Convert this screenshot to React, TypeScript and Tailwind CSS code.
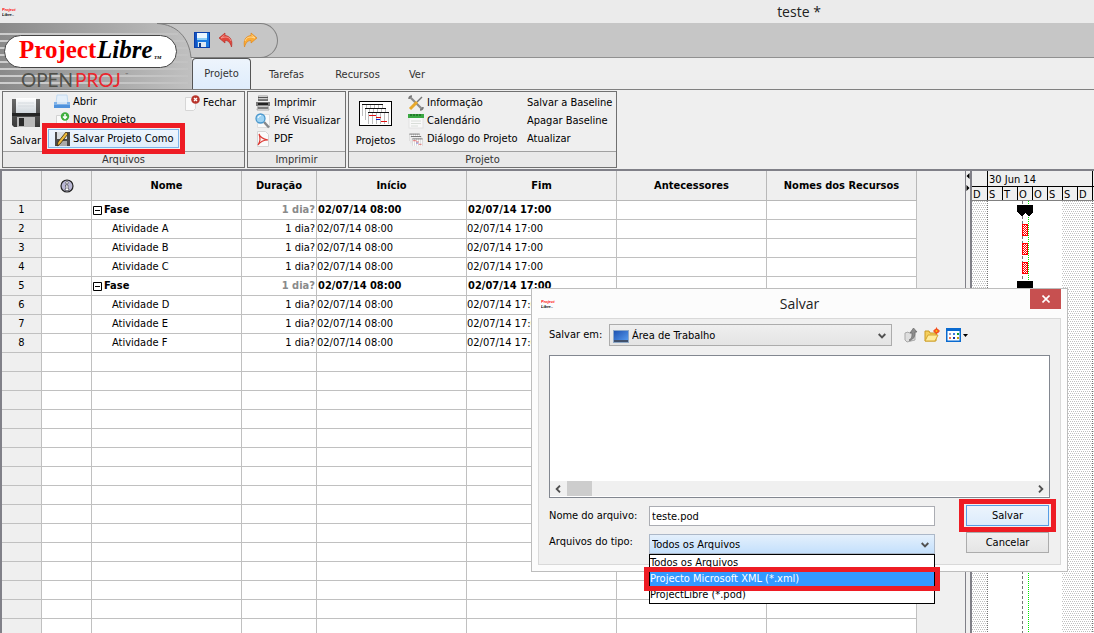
import React from 'react';

type Task = {
  name: string;
  start: string;
  end: string;
  phase?: boolean;
};

const START = '02/07/14 08:00';
const END = '02/07/14 17:00';

const tasks: Task[] = [
  { name: 'Fase', start: START, end: END, phase: true },
  { name: 'Atividade A', start: START, end: END },
  { name: 'Atividade B', start: START, end: END },
  { name: 'Atividade C', start: START, end: END },
  { name: 'Fase', start: START, end: END, phase: true },
  { name: 'Atividade D', start: START, end: END },
  { name: 'Atividade E', start: START, end: END },
  { name: 'Atividade F', start: START, end: END },
];

const emptyRows = Array.from({ length: 16 }, (_, i) => i);
const days = ['D', 'S', 'T', 'O', 'O', 'S', 'S', 'D'];
const tabs = ['Projeto', 'Tarefas', 'Recursos', 'Ver'];

/* ---------- icons ---------- */

const TinyLogo = () => (
  <svg width="17" height="11" viewBox="0 0 17 11" className="shrink-0">
    <text x="0" y="4" fontSize="4" fontWeight="bold" fontStyle="italic" fontFamily="Liberation Sans, sans-serif" fill="#f00">Project</text>
    <text x="0" y="9" fontSize="4" fontWeight="bold" fontStyle="italic" fontFamily="Liberation Sans, sans-serif" fill="#000">Libre..</text>
  </svg>
);

const DiskBlue = () => (
  <svg width="16" height="16" viewBox="0 0 16 16">
    <rect x="0.5" y="0.5" width="15" height="15" fill="#1d7be0" stroke="#0b3fa8" />
    <path d="M1 1h2v14H1z" fill="#1454c4" />
    <rect x="3" y="1" width="10" height="7" fill="#eaf6ff" />
    <rect x="3" y="6" width="10" height="2" fill="#8ccdf5" />
    <rect x="4" y="10" width="8" height="5" fill="#dfe9f2" />
    <rect x="5" y="11" width="2" height="4" fill="#173f86" />
  </svg>
);

const UndoIcon = () => (
  <svg width="16" height="16" viewBox="0 0 16 16">
    <path d="M7 1L1 6l6 5V8.500c3 0 5 1.500 6.500 6.500C15 8 12 4 7 3.500z" fill="#e0463c" stroke="#b3261e" strokeWidth="0.6" />
    <path d="M6.500 3L3 6l4-1c3 0 5 1 6 4" fill="none" stroke="#f6a59d" strokeWidth="0.8" />
  </svg>
);

const RedoIcon = () => (
  <svg width="16" height="16" viewBox="0 0 16 16">
    <path d="M9 1l6 5-6 5V8.500c-3 0-5 1.500-6.500 6.500C1 8 4 4 9 3.500z" fill="#fbab35" stroke="#dd8010" strokeWidth="0.6" />
    <path d="M9.500 3L13 6 9 5c-3 0-5 1-6 4" fill="none" stroke="#ffe0a3" strokeWidth="0.8" />
  </svg>
);

const SaveBig = () => (
  <svg width="30" height="32" viewBox="0 0 30 32">
    <defs>
      <linearGradient id="disk" x1="0" y1="0" x2="0" y2="1">
        <stop offset="0" stopColor="#6a6a6a" />
        <stop offset="1" stopColor="#3a3a3a" />
      </linearGradient>
      <linearGradient id="label" x1="0" y1="0" x2="0" y2="1">
        <stop offset="0" stopColor="#fff" />
        <stop offset="1" stopColor="#cfd6dc" />
      </linearGradient>
    </defs>
    <path d="M1 2h28v28H3l-2-2z" fill="url(#disk)" />
    <rect x="5" y="1" width="20" height="15" fill="url(#label)" />
    <path d="M7 6h16M7 9h16" stroke="#d5dade" />
    <rect x="1" y="16" width="28" height="3" fill="#242424" />
    <rect x="6" y="20" width="18" height="10" fill="#b9b9b9" />
    <rect x="8" y="21" width="5" height="8" fill="#2a2a2a" />
  </svg>
);

const OpenIcon = () => (
  <svg width="16" height="16" viewBox="0 0 16 16">
    <path d="M3 1h10l1 8H2z" fill="#e4effa" stroke="#c3daf0" />
    <path d="M0 8h3v2h10V8h3v6H0z" fill="#7fb2e8" />
    <path d="M0 11h16v3H0z" fill="#4f92dc" />
  </svg>
);

const NewIcon = () => (
  <svg width="16" height="16" viewBox="0 0 16 16">
    <path d="M2.500 3.500h10v12h-10z" fill="#fafafa" stroke="#d2d2d2" />
    <circle cx="11" cy="4.500" r="4.200" fill="#3fae3d" />
    <path d="M11 2v4M9 4.500l2 2 2-2" stroke="#fff" strokeWidth="1.500" fill="none" />
  </svg>
);

const SaveAsIcon = () => (
  <svg width="16" height="16" viewBox="0 0 16 16">
    <rect x="1" y="1" width="15" height="14" fill="#4b4b4b" />
    <rect x="3" y="1" width="10" height="7" fill="#d9dde0" />
    <rect x="5" y="10" width="8" height="5" fill="#a9a9a9" />
    <path d="M12 1L4 11l-1 4 3-2 8-10z" fill="#edbb3b" stroke="#3c2c0c" strokeWidth="0.8" />
  </svg>
);

const CloseDocIcon = () => (
  <svg width="15" height="16" viewBox="0 0 15 16">
    <path d="M0.500 2.500h10v11l-2 2h-8z" fill="#fafafa" stroke="#d6d6d6" />
    <circle cx="10.500" cy="4.500" r="4.300" fill="#b8352c" />
    <path d="M9 3l3 3M12 3L9 6" stroke="#fff" strokeWidth="1.300" />
  </svg>
);

const PrinterIcon = () => (
  <svg width="16" height="16" viewBox="0 0 16 16">
    <path d="M3.500 0.500h9v5h-9z" fill="#f6f6f6" stroke="#c4c4c4" />
    <path d="M3 2.500h10M3 5h10" stroke="#555" strokeWidth="1.500" />
    <path d="M1 7h14v4H1z" fill="#777" />
    <path d="M3 9h10" stroke="#222" strokeWidth="2" />
    <path d="M3 11h10l1 4H2z" fill="#eee" stroke="#a8a8a8" />
    <path d="M3 13h10" stroke="#555" strokeWidth="1.500" />
  </svg>
);

const PreviewIcon = () => (
  <svg width="16" height="16" viewBox="0 0 16 16">
    <path d="M2.500 1.500h12v13h-12z" fill="#fafafa" stroke="#dedede" />
    <path d="M9 9l5 5.500" stroke="#86898c" strokeWidth="2.500" />
    <circle cx="5.500" cy="5.500" r="4.500" fill="#9ed3f3" stroke="#4a97cc" strokeWidth="1.300" />
    <path d="M3 5a3 3 0 0 1 3-2.500" stroke="#fff" fill="none" />
  </svg>
);

const PdfIcon = () => (
  <svg width="16" height="16" viewBox="0 0 16 16">
    <path d="M2.500 0.500h8l3 3v12h-11z" fill="#fafafa" stroke="#d4d4d4" />
    <path d="M4 3c1 3 4 5 9 6-5 0-8 2-10 5 2-3 3-6 1-11z" stroke="#dc3a34" strokeWidth="1.200" fill="none" />
  </svg>
);

const GanttPages = ({ size }: { size: 'big' | 'small' }) => (
  <svg width={size === 'big' ? 33 : 16} height={size === 'big' ? 25 : 15} viewBox="0 0 33 25" preserveAspectRatio="none">
    {size === 'big' && <rect x="0.500" y="0.500" width="32" height="24" fill="#fff" stroke="#000" />}
    {[[3, 3], [6, 7], [9, 11]].map(([x, y]) => (
      <g key={x}>
        <rect x={x} y={y} width="20" height="12" fill="#fff" />
        <path d={`M${x + 0.5} ${y}v12M${x + 4.5} ${y}v12M${x + 8.5} ${y}v12M${x + 12.5} ${y}v12M${x + 16.5} ${y}v12M${x + 20.5} ${y}v12`} stroke="#bdbdbd" />
        <path d={`M${x} ${y + 0.5}h21`} stroke="#111" />
      </g>
    ))}
    <path d="M10 14.500h7M17 16.500h5M22 20.500h6" stroke="#e01010" />
    <path d="M17 18.500h4" stroke="#1020d0" />
  </svg>
);

const ToolsIcon = () => (
  <svg width="16" height="16" viewBox="0 0 16 16">
    <path d="M2 2l12 12" stroke="#8c8c8c" strokeWidth="2.200" />
    <path d="M1 4c0-2 1-3 3-3M12 15c2 0 3-1 3-3" stroke="#777" strokeWidth="1.500" fill="none" />
    <path d="M9 7l5-5" stroke="#777" strokeWidth="1.500" />
    <path d="M2 14l7-7" stroke="#e8a92c" strokeWidth="3" />
  </svg>
);

const CalendarIcon = () => (
  <svg width="16" height="16" viewBox="0 0 16 16">
    <rect x="1" y="2" width="14" height="13" fill="#f9f9f9" stroke="#e2e2e2" />
    <rect x="0" y="1" width="16" height="4" fill="#3aa843" />
    <path d="M3 1v2M6 1v2M9 1v2M12 1v2" stroke="#124f17" />
    <path d="M3 8h10M3 10.500h10M3 13h7" stroke="#d9ded9" />
  </svg>
);

const InfoBadge = () => (
  <svg width="14" height="14" viewBox="0 0 14 14" className="mx-auto" aria-label="Indicadores">
    <circle cx="7" cy="7" r="6" fill="#b9b7d4" stroke="#222" strokeWidth="1.200" />
    <circle cx="7" cy="3.800" r="1.300" fill="#fff" stroke="#333" strokeWidth="0.600" />
    <path d="M5.500 6h2.500v4h1v1.500H5V10h1V7.300h-.5z" fill="#fff" stroke="#333" strokeWidth="0.600" />
  </svg>
);

const Chevron = ({ className = '' }: { className?: string }) => (
  <svg width="8" height="6" viewBox="0 0 8 6" className={className}>
    <path d="M0.700 1L4 4.300 7.300 1" stroke="#505050" strokeWidth="1.900" fill="none" />
  </svg>
);

const UpFolderIcon = () => (
  <svg width="14" height="16" viewBox="0 0 14 16">
    <path d="M1 6l3-1 1 1 6-1v8l-8 2-2-2z" fill="#dedede" stroke="#a9a9a9" />
    <path d="M5 13c3-1 3-4 3-7H6l3.500-5L13 5h-2c0 4-1 7-5 8.500z" fill="#8d8d8d" stroke="#666" strokeWidth="0.700" />
  </svg>
);

const NewFolderIcon = () => (
  <svg width="16" height="16" viewBox="0 0 16 16">
    <path d="M1 14V4h4l1 2h6v8z" fill="#f6cf5c" stroke="#c99a22" />
    <path d="M1 14l3-6h10l-3 6z" fill="#ffec9c" stroke="#d4a631" />
    <circle cx="12.500" cy="4" r="2.500" fill="#f4511e" />
    <path d="M12.500 0.500v7M9 4h7" stroke="#f4511e" />
    <circle cx="12.500" cy="4" r="1" fill="#ffc107" />
  </svg>
);

const ViewMenuIcon = () => (
  <svg width="22" height="14" viewBox="0 0 22 14">
    <rect x="0.750" y="0.750" width="13.500" height="12.500" fill="#fff" stroke="#0a6ad0" strokeWidth="1.500" />
    <rect x="0" y="0" width="15" height="3" fill="#0a6ad0" />
    <path d="M3 5h2v2H3z" fill="#9a9ac8" />
    <path d="M7 5h2v2H7z" fill="#3c7be0" />
    <path d="M11 5h2v2h-2z" fill="#149a2c" />
    <path d="M3 9h2v2H3z" fill="#f0764a" />
    <path d="M7 9h2v2H7z" fill="#15329c" />
    <path d="M11 9h2v2h-2z" fill="#c79a10" />
    <path d="M17 6h5l-2.500 3z" fill="#000" />
  </svg>
);

const DesktopIcon = () => (
  <svg width="16" height="13" viewBox="0 0 16 13" className="pointer-events-none absolute left-1 top-[6px]">
    <defs>
      <linearGradient id="screen" x1="0" y1="0" x2="1" y2="1">
        <stop offset="0" stopColor="#1c4fae" />
        <stop offset="1" stopColor="#5ba2f5" />
      </linearGradient>
    </defs>
    <rect x="0.500" y="0.500" width="15" height="12" fill="url(#screen)" stroke="#8ea9c8" />
    <rect x="1" y="10" width="14" height="2" fill="#40506b" />
  </svg>
);

/* ---------- ribbon ---------- */

const Logo = () => (
  <svg width="192" height="67" viewBox="0 0 192 67" className="shrink-0" role="img" aria-label="ProjectLibre OpenProj">
    <defs>
      <linearGradient id="metal" x1="0" y1="0" x2="1" y2="0">
        <stop offset="0" stopColor="#8a8a8a" />
        <stop offset="1" stopColor="#c0c0c0" />
      </linearGradient>
      <linearGradient id="stripe" x1="0" y1="0" x2="1" y2="0">
        <stop offset="0" stopColor="#cdcdcd" />
        <stop offset="1" stopColor="#c2c2c2" />
      </linearGradient>
    </defs>
    <rect width="192" height="67" fill="#c6c6c6" />
    <path d="M0 0h157c20 1 32 14 34 34v33H0z" fill="url(#metal)" />
    {[10, 17, 24, 31, 38, 45, 52, 59].map((y) => (
      <rect key={y} x="0" y={y} width={y < 15 ? 178 : 188} height="2" fill="url(#stripe)" />
    ))}
    <path d="M157 0.500h35M157 0.500c20 1 32 14 34 34h1" fill="none" stroke="#7d7d7d" />
    <rect x="4.500" y="12.500" width="172" height="32" rx="16" fill="#fff" stroke="#444" />
    <g fontFamily="'Liberation Serif', serif" fontWeight="bold">
      <text x="19" y="35" fontSize="25" fill="#f00">Project</text>
      <text x="97" y="35" fontSize="25" fontStyle="italic" fill="#000">Libre</text>
      <text x="154" y="36" fontSize="5" fontStyle="italic" fill="#000">TM</text>
    </g>
    <g fontFamily="Lato, sans-serif" fontSize="19">
      <text x="21" y="64" fill="#4f504a">OPEN</text>
      <text x="75" y="64" fill="#e9262d">PROJ</text>
    </g>
    <text x="125" y="53" fontSize="4" fill="#444">™</text>
    <path d="M0 66.500h192" stroke="#8a8a8a" />
  </svg>
);

type CommandProps = {
  icon?: React.ReactNode;
  label: string;
};

const Command: React.FC<CommandProps> = ({ icon, label }) => (
  <button className="flex h-[18px] items-center gap-[3px] whitespace-nowrap">
    {icon}
    <span>{label}</span>
  </button>
);

type GroupProps = {
  title: string;
  className: string;
  children: React.ReactNode;
};

const RibbonGroup: React.FC<GroupProps> = ({ title, className, children }) => (
  <section className={`flex h-[77px] shrink-0 flex-col border border-[#707070] bg-[#efefef] ${className}`}>
    <div className="flex min-h-0 flex-1">{children}</div>
    <h2 className="h-4 border-t border-[#a0a0a0] bg-[#e9e9e9] text-center leading-[15px] text-[#333]">{title}</h2>
  </section>
);

const Ribbon = () => (
  <header className="shrink-0">
    <div className="flex h-[23px] items-start bg-[#ebebeb]">
      <div className="w-[504px] p-[2px] pt-[7px]">
        <TinyLogo />
      </div>
      <h1 className="flex-1 text-center font-['Open_Sans',sans-serif] text-sm leading-6 text-[#222]">teste *</h1>
    </div>

    <div className="flex h-[67px]">
      <Logo />
      <div className="flex min-w-0 flex-1 flex-col">
        <div className="flex h-[35px] border-b border-[#909090] bg-[#c6c6c6]">
          <div className="flex h-[35px] w-[86px] items-center gap-2 rounded-r-full border border-l-0 border-[#808080] pb-px pl-[2px]">
            <button aria-label="Salvar"><DiskBlue /></button>
            <button aria-label="Desfazer"><UndoIcon /></button>
            <button aria-label="Refazer"><RedoIcon /></button>
          </div>
        </div>
        <nav className="flex h-8 border-b border-[#808080] bg-[#eeeeee]">
          {tabs.map((tab, i) => (
            <button
              key={tab}
              className={
                i === 0
                  ? 'w-[59px] rounded-t-sm border border-b-0 border-[#555] bg-gradient-to-b from-[#edf4fc] to-[#dfedfc] text-[#333]'
                  : i === 3 ? 'w-[48px] pt-0.5 text-[#333]' : 'w-[71px] pt-0.5 text-[#333]'
              }
            >
              {tab}
            </button>
          ))}
        </nav>
      </div>
    </div>

    <div className="flex gap-0.5 bg-[#efefef] px-[2px] py-px">
      <RibbonGroup title="Arquivos" className="w-[243px]">
        <button className="flex w-[45px] flex-col items-center gap-1 pt-[5px]">
          <SaveBig />
          <span className="leading-4">Salvar</span>
        </button>
        <div className="flex flex-col pt-px">
          <div className="pl-1.5"><Command icon={<OpenIcon />} label="Abrir" /></div>
          <div className="pl-1.5"><Command icon={<NewIcon />} label="Novo Projeto" /></div>
          <button className="relative flex h-[19px] w-[131px] items-center gap-[3px] whitespace-nowrap border border-[#7db5ea] bg-gradient-to-b from-[#eef5fd] to-[#dfeefc] pl-[5px]">
            <SaveAsIcon />
            <span>Salvar Projeto Como</span>
            <span className="pointer-events-none absolute -inset-x-[7px] -inset-y-[7px] border-[5px] border-[#ee1c24]" />
          </button>
        </div>
        <div className="pl-1.5 pt-0.5"><Command icon={<CloseDocIcon />} label="Fechar" /></div>
      </RibbonGroup>

      <RibbonGroup title="Imprimir" className="w-[99px]">
        <div className="flex flex-col pl-[7px] pt-0.5">
          <Command icon={<PrinterIcon />} label="Imprimir" />
          <Command icon={<PreviewIcon />} label="Pré Visualizar" />
          <Command icon={<PdfIcon />} label="PDF" />
        </div>
      </RibbonGroup>

      <RibbonGroup title="Projeto" className="w-[269px]">
        <button className="flex w-[53px] flex-col items-center gap-[7px] pt-[9px]">
          <GanttPages size="big" />
          <span className="leading-4">Projetos</span>
        </button>
        <div className="flex w-[125px] flex-col pl-1.5 pt-0.5">
          <Command icon={<ToolsIcon />} label="Informação" />
          <Command icon={<CalendarIcon />} label="Calendário" />
          <Command icon={<GanttPages size="small" />} label="Diálogo do Projeto" />
        </div>
        <div className="flex flex-col pt-0.5">
          <Command label="Salvar a Baseline" />
          <Command label="Apagar Baseline" />
          <Command label="Atualizar" />
        </div>
      </RibbonGroup>
    </div>
  </header>
);

/* ---------- task sheet ---------- */

const TaskSheet = () => (
  <div className="min-w-0 flex-1 overflow-hidden bg-[#f0f0f0]">
    <table className="w-[915px] table-fixed border-separate border-spacing-0 bg-white [&_td]:h-[19px] [&_td]:overflow-hidden [&_td]:whitespace-nowrap [&_td]:border-b [&_td]:border-r [&_td]:border-[#c0c0c0] [&_td]:p-0 [&_td]:leading-[18px] [&_th]:h-[30px] [&_th]:border-b [&_th]:border-r [&_th]:border-[#b8b8b8] [&_th]:bg-[#efefef] [&_th]:p-0">
      <colgroup>
        <col className="w-10" />
        <col className="w-[50px]" />
        <col className="w-[150px]" />
        <col className="w-[75px]" />
        <col className="w-[150px]" />
        <col className="w-[150px]" />
        <col className="w-[150px]" />
        <col className="w-[150px]" />
      </colgroup>
      <thead>
        <tr>
          <th />
          <th><InfoBadge /></th>
          <th>Nome</th>
          <th>Duração</th>
          <th>Início</th>
          <th>Fim</th>
          <th>Antecessores</th>
          <th>Nomes dos Recursos</th>
        </tr>
      </thead>
      <tbody>
        {tasks.map((task, i) => (
          <tr key={i} className={task.phase ? 'font-bold' : ''}>
            <td className="bg-[#efefef] text-center font-normal">{i + 1}</td>
            <td />
            <td>
              {task.phase ? (
                <span className="flex items-center gap-0.5 pl-px">
                  <svg width="9" height="9" viewBox="0 0 9 9">
                    <path d="M0.500 0.500h8v8h-8zM2 4.500h5" fill="none" stroke="#000" />
                  </svg>
                  {task.name}
                </span>
              ) : (
                <span className="pl-5">{task.name}</span>
              )}
            </td>
            <td className={task.phase ? 'text-right text-[#8a8a8a]' : 'text-right'}>
              <span className="pr-px">1 dia?</span>
            </td>
            <td><span className={task.phase ? 'pl-px' : ''}>{task.start}</span></td>
            <td><span className={task.phase ? 'pl-px' : ''}>{task.end}</span></td>
            <td />
            <td />
          </tr>
        ))}
        {emptyRows.map((row) => (
          <tr key={row}>
            <td className="bg-[#efefef]" />
            <td />
            <td />
            <td />
            <td />
            <td />
            <td />
            <td />
          </tr>
        ))}
      </tbody>
    </table>
  </div>
);

/* ---------- gantt ---------- */

const Splitter = () => (
  <div className="w-[7px] shrink-0 border-l border-r-2 border-[#808088] bg-[#efefef]">
    <svg width="4" height="22" viewBox="0 0 4 22">
      <path d="M3.500 2v6l-3-3zM0.500 14v6l3-3z" fill="#000" />
    </svg>
  </div>
);

const Gantt = () => (
  <div className="flex w-[122px] shrink-0 flex-col overflow-hidden bg-white">
    <div className="flex h-4 shrink-0 border-b border-black bg-[#efefef]">
      <div className="w-4 border-r border-black" />
      <div className="flex-1 pl-px pt-0.5 leading-[14px]">30 Jun 14</div>
      <div className="w-0.5 border-l border-black" />
    </div>
    <div className="flex h-[14px] shrink-0 overflow-hidden border-b border-[#808080] bg-[#efefef]">
      {days.map((day, i) => (
        <div
          key={i}
          className={
            i === 0
              ? 'w-4 shrink-0 overflow-hidden border-r border-black pl-px leading-[15px]'
              : 'w-[15px] shrink-0 overflow-hidden border-r border-black pl-px leading-[15px]'
          }
        >
          {day}
        </div>
      ))}
    </div>
    <svg width="122" className="min-h-0 flex-1" shapeRendering="crispEdges">
      <defs>
        <pattern id="dots" width="4" height="4" patternUnits="userSpaceOnUse">
          <rect width="4" height="4" fill="#fff" />
          <rect width="1" height="1" fill="#c0c0c0" />
          <rect x="2" y="0" width="1" height="1" fill="#c0c0c0" />
          <rect x="1" y="2" width="1" height="1" fill="#c0c0c0" />
          <rect x="3" y="2" width="1" height="1" fill="#c0c0c0" />
        </pattern>
        <pattern id="bar" width="2" height="2" patternUnits="userSpaceOnUse">
          <rect width="2" height="2" fill="#fff" />
          <rect width="1" height="1" fill="#f00" />
          <rect x="1" y="1" width="1" height="1" fill="#f00" />
        </pattern>
      </defs>
      <rect width="15" height="100%" fill="url(#dots)" />
      <rect x="90" width="32" height="100%" fill="url(#dots)" />
      <line x1="15.500" x2="15.500" y1="0" y2="100%" stroke="#777" strokeDasharray="1 1" />
      <line x1="120.500" x2="120.500" y1="0" y2="100%" stroke="#777" strokeDasharray="1 1" />
      <line x1="50.500" x2="50.500" y1="0" y2="100%" stroke="#777" strokeDasharray="3 2" />
      <line x1="56.500" x2="56.500" y1="0" y2="100%" stroke="#0e0" strokeDasharray="1 1" />
      {[4, 80].map((y) => (
        <path key={y} d={`M45 ${y}h16v7l-4 4h-1l-3-3-3 3h-1l-4-4z`} fill="#000" />
      ))}
      {[23, 42, 61].map((y) => (
        <rect key={y} x="50.500" y={y + 0.5} width="5" height="11" fill="url(#bar)" stroke="#f00" />
      ))}
    </svg>
  </div>
);

/* ---------- save dialog ---------- */

const SaveDialog = () => (
  <div role="dialog" aria-labelledby="dialog-title" className="absolute left-[531px] top-[288px] w-[537px] border border-[#bdbdbd] bg-[#fcfcfc] px-1.5 pb-1.5">
    <div className="grid h-[29px] grid-cols-[31px_1fr_31px] items-start">
      <div className="pl-[3px] pt-[10px]"><TinyLogo /></div>
      <h2 id="dialog-title" className="text-center font-['Open_Sans',sans-serif] text-sm leading-[29px] text-[#222]">Salvar</h2>
      <button aria-label="Fechar" className="flex h-5 items-center justify-center bg-[#c75050]">
        <svg width="8" height="8" viewBox="0 0 8 8">
          <path d="M0.500 0.500l7 7M7.500 0.500l-7 7" stroke="#fff" strokeWidth="1.600" />
        </svg>
      </button>
    </div>

    <div className="border border-[#d9d9d9] bg-[#f0f0f0] px-2.5 pb-2.5 pt-[5px]">
      <div className="flex items-center">
        <label htmlFor="folder" className="w-[60px] shrink-0">Salvar em:</label>
        <div className="relative w-[283px]">
          <DesktopIcon />
          <select id="folder" className="h-[22px] w-full appearance-none border border-[#acacac] bg-gradient-to-b from-[#efefef] to-[#e4e4e4] pl-[22px] pt-px">
            <option>Área de Trabalho</option>
          </select>
          <Chevron className="pointer-events-none absolute right-1.5 top-[9px]" />
        </div>
        <div className="ml-3 flex items-center gap-1.5">
          <button aria-label="Um nível acima"><UpFolderIcon /></button>
          <button aria-label="Nova pasta"><NewFolderIcon /></button>
          <button aria-label="Menu de visualização"><ViewMenuIcon /></button>
        </div>
      </div>

      <div className="mt-[9px] flex h-[143px] w-[501px] flex-col justify-end border border-[#828790] bg-white pb-px">
        <div className="flex h-[15px] items-center bg-[#f0f0f0] pl-1 pr-1">
          <Chevron className="rotate-90" />
          <div className="ml-[5px] h-full w-[25px] bg-[#cdcdcd]" />
          <Chevron className="-rotate-90 ml-auto" />
        </div>
      </div>

      <div className="mt-2 flex w-[500px] justify-between">
        <div className="flex flex-col gap-2">
          <div className="flex">
            <label htmlFor="filename" className="w-[100px] leading-[19px]">Nome do arquivo:</label>
            <input id="filename" defaultValue="teste.pod" className="h-5 w-[286px] border border-[#abadb3] bg-white px-0.5" />
          </div>
          <div className="flex">
            <label htmlFor="filetype" className="w-[100px] leading-[15px]">Arquivos do tipo:</label>
            <div className="relative w-[286px]">
              <select id="filetype" className="h-5 w-full appearance-none border border-[#acb8c8] bg-gradient-to-b from-[#e4f0fc] to-[#c4e0fc] px-0.5 pt-px">
                <option>Todos os Arquivos</option>
              </select>
              <Chevron className="pointer-events-none absolute right-1.5 top-2" />
              <ul role="listbox" className="absolute left-0 top-5 w-full border border-black bg-white leading-4">
                <li role="option" aria-selected="false">Todos os Arquivos</li>
                <li role="option" aria-selected="true" className="relative bg-[#3399ff] text-white">
                  Projecto Microsoft XML (*.xml)
                  <span className="pointer-events-none absolute -inset-x-1.5 -inset-y-1 border-[5px] border-[#ee1c24]" />
                </li>
                <li role="option" aria-selected="false">ProjectLibre (*.pod)</li>
              </ul>
            </div>
          </div>
        </div>
        <div className="-mt-px flex w-[83px] flex-col gap-1.5">
          <button className="relative h-[21px] border border-[#569de5] bg-gradient-to-b from-[#ecf4fc] to-[#dcecfc]">
            Salvar
            <span className="pointer-events-none absolute -inset-x-2 -inset-y-[7px] border-[5px] border-[#ee1c24]" />
          </button>
          <button className="h-[21px] border border-[#acacac] bg-gradient-to-b from-[#f0f0f0] to-[#e5e5e5]">Cancelar</button>
        </div>
      </div>
    </div>
  </div>
);

const App: React.FC = () => {
  return (
    <div className="relative flex h-screen flex-col overflow-hidden bg-[#efefef] font-['DejaVu_Sans_Condensed','Noto_Sans',sans-serif] text-[11px] leading-4 text-black">
      <Ribbon />
      <main className="flex min-h-0 flex-1 border-l-2 border-t-2 border-[#808088]">
        <TaskSheet />
        <Splitter />
        <Gantt />
      </main>
      <SaveDialog />
    </div>
  );
};

export default App;
